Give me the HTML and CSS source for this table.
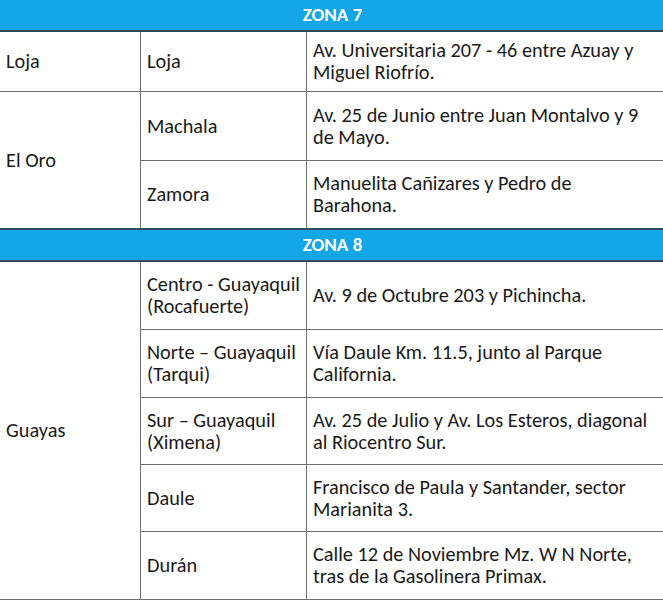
FILE: index.html
```html
<!DOCTYPE html>
<html lang="es">
<head>
<meta charset="utf-8">
<title>Zonas</title>
<link rel="stylesheet" href="styles.css">
</head>
<body>
<table class="zones">
  <colgroup>
    <col class="c1"><col class="c2"><col class="c3">
  </colgroup>
  <tbody>
    <tr class="zone-head"><th colspan="3">ZONA 7</th></tr>
    <tr class="r-loja">
      <td>Loja</td>
      <td>Loja</td>
      <td>Av. Universitaria 207 - 46 entre Azuay y<br>Miguel Riofrío.</td>
    </tr>
    <tr class="r-zam">
      <td rowspan="2">El Oro</td>
      <td>Machala</td>
      <td>Av. 25 de Junio entre Juan Montalvo y 9<br>de Mayo.</td>
    </tr>
    <tr class="r-zam">
      <td>Zamora</td>
      <td>Manuelita Cañizares y Pedro de<br>Barahona.</td>
    </tr>
    <tr class="zone-head"><th colspan="3">ZONA 8</th></tr>
    <tr class="r-tall">
      <td rowspan="5">Guayas</td>
      <td>Centro - Guayaquil<br>(Rocafuerte)</td>
      <td>Av. 9 de Octubre 203 y Pichincha.</td>
    </tr>
    <tr class="r-tall">
      <td>Norte – Guayaquil<br>(Tarqui)</td>
      <td>Vía Daule Km. 11.5, junto al Parque<br>California.</td>
    </tr>
    <tr class="r-mid">
      <td>Sur – Guayaquil<br>(Ximena)</td>
      <td>Av. 25 de Julio y Av. Los Esteros, diagonal<br>al Riocentro Sur.</td>
    </tr>
    <tr class="r-mid">
      <td>Daule</td>
      <td>Francisco de Paula y Santander, sector<br>Marianita 3.</td>
    </tr>
    <tr class="r-tall">
      <td>Durán</td>
      <td>Calle 12 de Noviembre Mz. W N Norte,<br>tras de la Gasolinera Primax.</td>
    </tr>
  </tbody>
</table>
</body>
</html>
```
FILE: styles.css
```css
html, body {
  margin: 0;
  padding: 0;
  background: #ffffff;
}
body {
  overflow: hidden;
}
.zones {
  margin-left: -1px;
  width: 666px;
  border-collapse: collapse;
  table-layout: fixed;
  font-family: "Carlito", "Open Sans", sans-serif;
  font-size: 20.3px;
  line-height: 22px;
  color: #1a1a1a;
}
.c1 { width: 141px; }
.c2 { width: 166px; }
.c3 { width: 359px; }
.zones td {
  border: 1px solid #6f6f6f;
  padding: 0 6px;
  vertical-align: middle;
  text-align: left;
  white-space: nowrap;
}
.zone-head th {
  background: #12a6e6;
  color: #ffffff;
  font-weight: bold;
  font-size: 19px;
  height: 30px;
  padding: 0;
  text-align: center;
  border-top: 2px solid #2d4a5c;
  border-bottom: 2px solid #2d4a5c;
  border-left: 1px solid #12a6e6;
  border-right: 1px solid #12a6e6;
}
.zone-head:first-child th {
  border-top: none;
  height: 30px;
}
.r-loja { height: 60px; }
.r-tall { height: 68px; }
.r-zam { height: 69px; }
.r-mid { height: 67px; }
```
